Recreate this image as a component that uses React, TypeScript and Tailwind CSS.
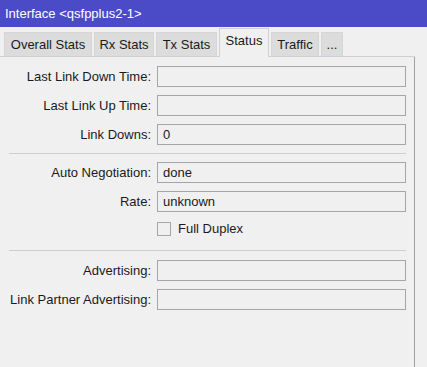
import React from 'react'

const tabs = [
  { name: 'Overall Stats', w: 'w-[88px]' },
  { name: 'Rx Stats', w: 'w-[60px]' },
  { name: 'Tx Stats', w: 'w-[61px]' },
  { name: 'Status', w: 'w-[50px]' },
  { name: 'Traffic', w: 'w-[48px]' },
  { name: '...', w: 'w-[22px]' },
]

function Field({ label, value }: { label: string; value?: string }) {
  return (
    <div className="flex items-center h-[21px] mb-[8px]">
      <div className="w-[153px] pr-[2px] text-right whitespace-nowrap">{label}</div>
      <div className="ml-[4px] w-[249px] h-[21px] border border-[#a6a6a6] bg-[#f0f0f0] px-[5px] leading-[19px]">
        {value}
      </div>
    </div>
  )
}

export default function App() {
  return (
    <div
      className="w-[427px] h-[367px] bg-[#f0f0f0] text-[13px] text-[#1a1a1a] overflow-hidden"
      style={{ fontFamily: '"Liberation Sans", Arial, sans-serif' }}
    >
      <div className="h-[27px] bg-[#4b4bc8] text-white pl-[5px] leading-[27px] text-[13px]">
        Interface &lt;qsfpplus2-1&gt;
      </div>

      <div className="flex items-end h-[30px] pl-[4px] gap-[2px] w-[415px] border-b border-[#d0d0d0]">
        {tabs.map((t) =>
          t.name === 'Status' ? (
            <div
              key={t.name}
              className={`${t.w} h-[29px] text-center bg-[#f0f0f0] border border-b-0 border-[#d0d0d0] leading-[24px] -mb-px relative`}
            >
              {t.name}
            </div>
          ) : (
            <div
              key={t.name}
              className={`${t.w} h-[24px] text-center bg-[#dcdcdc] border border-b-0 border-[#d6d6d6] leading-[23px]`}
            >
              {t.name}
            </div>
          )
        )}
      </div>

      <div className="w-[415px] h-[310px] border-r border-[#a0a0a0] pt-[9px]">
        <Field label="Last Link Down Time:" />
        <Field label="Last Link Up Time:" />
        <Field label="Link Downs:" value="0" />
        <div className="ml-[9px] w-[397px] border-t border-[#cfcfcf] mt-[2px] mb-[8px]" />
        <Field label="Auto Negotiation:" value="done" />
        <Field label="Rate:" value="unknown" />
        <div className="flex items-center h-[18px] mb-[12px] pl-[157px]">
          <div className="w-[14px] h-[14px] border border-[#a6a6a6] bg-[#f0f0f0]" />
          <span className="ml-[7px]">Full Duplex</span>
        </div>
        <div className="ml-[9px] w-[397px] border-t border-[#cfcfcf] mb-[9px]" />
        <Field label="Advertising:" />
        <Field label="Link Partner Advertising:" />
      </div>
    </div>
  )
}
